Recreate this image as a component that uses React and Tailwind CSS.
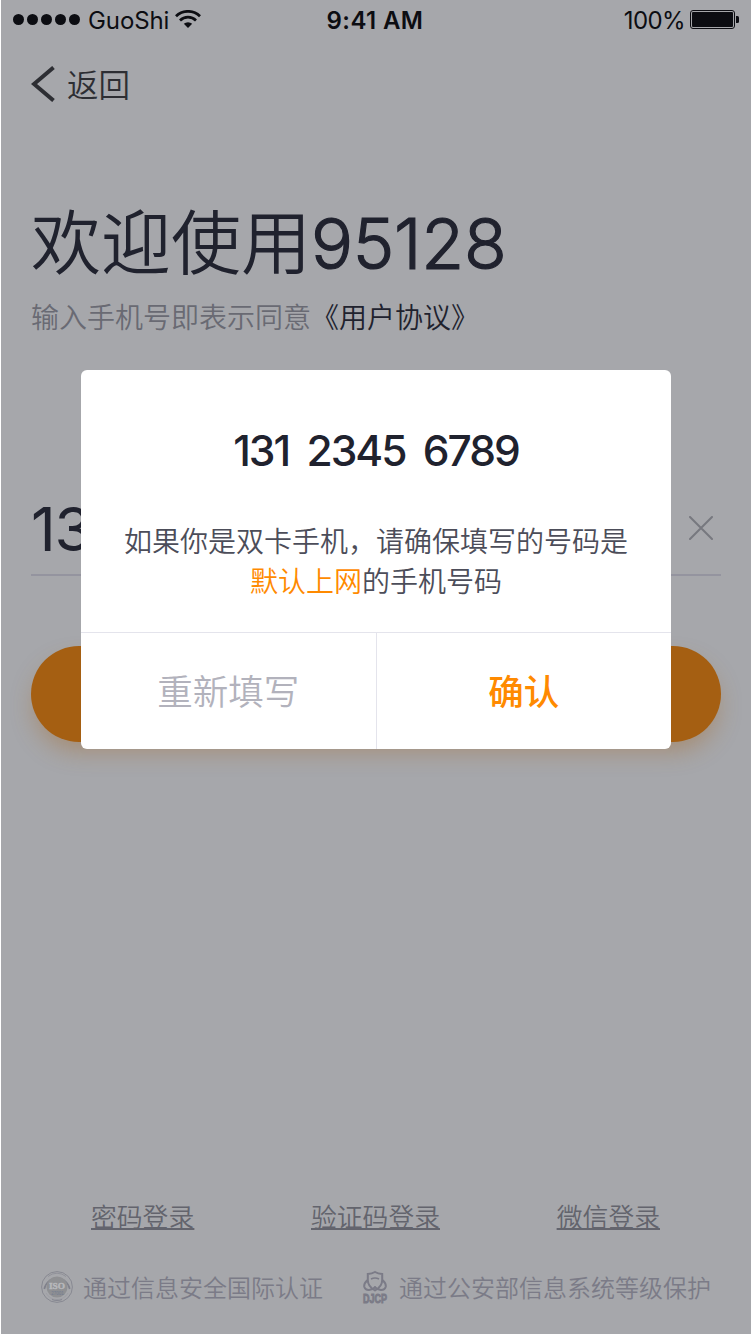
import React from "react";

const latin = "font-['Inter','Noto_Sans_CJK_SC',sans-serif]";

function StatusBar() {
  return (
    <div className="flex h-10 items-center justify-between text-[24px] leading-[38px] text-[#0c0d12]">
      <div className="flex w-[250px] items-center pl-3">
        <div className="mb-px flex gap-[3px]">
          {[0, 1, 2, 3, 4].map((i) => (
            <span key={i} className="h-[11px] w-[11px] rounded-full bg-[#0c0d12]" />
          ))}
        </div>
        <span className="ml-[8px] pt-[2px] tracking-[-0.1px]">GuoShi</span>
        <svg className="mb-[3px] ml-[6px] h-[18px] w-[26px]" viewBox="0 0 26 18" fill="none" stroke="currentColor" strokeWidth="2.8">
          <path d="M1 6.2a17.3 17.3 0 0 1 24 0" />
          <path d="M5 10.4a11.6 11.6 0 0 1 16 0" />
          <path d="M13 18l-4.2-4.2a6.2 6.2 0 0 1 8.4 0z" fill="currentColor" stroke="none" />
        </svg>
      </div>
      <span className="pt-[2px] pr-[2px] font-semibold tracking-[0.4px]">9:41 AM</span>
      <div className="flex w-[250px] items-center justify-end pr-[11px] pl-1">
        <span className="mr-[5px] pt-[2px] font-normal tracking-[-0.6px]">100%</span>
        <svg className="mb-[2px] mr-px h-[19px] w-[49px]" viewBox="0 0 49 19">
          <rect x="0.5" y="0.5" width="44" height="18" rx="2.5" fill="none" stroke="currentColor" />
          <rect x="2" y="2" width="41" height="15" rx="1" fill="currentColor" />
          <path d="M46 6h1.500a1.500 1.500 0 0 1 1.500 1.500v4a1.500 1.500 0 0 1-1.500 1.500H46z" fill="currentColor" />
        </svg>
      </div>
    </div>
  );
}

function IsoSeal() {
  return (
    <svg className="h-8 w-8" viewBox="0 0 32 32" fill="none">
      <circle cx="16" cy="16" r="15.4" stroke="#85868f" strokeWidth="0.9" />
      <path d="M3.300 18A12.900 12.900 0 0 1 28.700 18" stroke="#7f808b" strokeWidth="1.600" />
      <path d="M7 5.500A14 14 0 0 1 25 5.500" stroke="#8c8d95" strokeWidth="0.8" />
      <circle cx="16" cy="16" r="10.500" fill="#8f9093" />
      <path d="M5 22a12.600 12.600 0 0 0 22 0" stroke="#999aa0" strokeWidth="0.7" />
      <path d="M11 28.500q5 1.800 10 0" stroke="#858690" strokeWidth="1.200" />
      <text x="16" y="17.800" textAnchor="middle" textLength="16" lengthAdjust="spacingAndGlyphs" fontFamily="Liberation Serif" fontWeight="700" fontSize="8.500" fill="#b8b9bc" stroke="#b8b9bc" strokeWidth="0.4">ISO</text>
      <text x="16.500" y="24.300" textAnchor="middle" fontFamily="Liberation Sans" fontSize="4.500" fill="#727b91">27001</text>
    </svg>
  );
}

function DjcpBadge() {
  return (
    <svg className="h-8 w-6 overflow-visible" viewBox="0 0 24 32" fill="none" stroke="#7b7b87">
      <path d="M12 1Q9 2.800 4.800 3v6q0 6.500 7.200 10.500 7.200-4 7.200-10.500V3Q15 2.800 12 1z" strokeWidth="2" />
      <path d="M8 8q4-2 8 0" strokeWidth="1.500" />
      <path d="M4.300 9.200Q.8 12.500 1.200 15.500 2 19 6 19q3.500-.2 7-3.200" strokeWidth="2" />
      <path d="M19.700 9.200q3.500 3.300 3.100 6.300-.8 3.500-4.800 3.500-3.500-.2-7-3.200" strokeWidth="2" />
      <text x="0" y="31.500" textLength="24" lengthAdjust="spacingAndGlyphs" fontFamily="Liberation Sans Narrow, Liberation Sans" fontWeight="700" fontSize="13.500" fill="#7b7b87" strokeWidth="1">DJCP</text>
    </svg>
  );
}

function Dialog() {
  return (
    <div className="absolute inset-0 flex justify-center pt-[370px]">
      <div className="flex h-[379px] w-[590px] flex-col overflow-hidden rounded-[6px] bg-white">
        <div className="flex h-[262px] flex-col items-center">
          <h2 className="mt-[51px] text-[42.5px] leading-[60px] font-medium tracking-[-2px] text-[#20222e] [word-spacing:8px]">131 2345 6789</h2>
          <p className="mt-[41px] text-center text-[28px] leading-[40px] font-[350] text-[#4c4d59]">
            如果你是双卡手机，请确保填写的号码是
            <br />
            <span className="text-[#ff8a00]">默认上网</span>的手机号码
          </p>
        </div>
        <div className="flex flex-1 border-t border-[#e4e4ec] text-[35.5px]">
          <button className="flex-1 border-r border-[#e4e4ec] pt-1 font-[350] text-[#b2b2bc]">重新填写</button>
          <button className="flex-1 pt-1 font-medium text-[#ff8a00]">确认</button>
        </div>
      </div>
    </div>
  );
}

export default function App() {
  return (
    <div className={`h-[1334px] w-[751px] overflow-hidden bg-white pl-px ${latin}`}>
      <div className="relative flex h-full flex-col overflow-hidden bg-[#a6a7ab]">
        <StatusBar />
        <div className="flex h-[88px] items-center pl-[30px] text-[#2d2e33]">
          <svg className="h-9 w-6" viewBox="0 0 24 36" fill="none" stroke="currentColor" strokeWidth="4">
            <path d="M22.500 1.500L3 18l19.500 16.500" />
          </svg>
          <span className="ml-[12px] pt-[3px] text-[31.5px] leading-[40px] font-[350]">返回</span>
        </div>
        <h1 className="mt-[67px] flex h-[98px] pl-[30px] text-[70px] leading-[98px] font-[350] text-[#20222e]">
          欢迎使用
          <span className="text-[70px] font-[340] tracking-[-0.3px] [-webkit-text-stroke:1.2px_#20222e]">95128</span>
        </h1>
        <p className="mt-[5px] pl-[30px] text-[28px] leading-[40px] font-[350] text-[#696a73]">
          输入手机号即表示同意<span className="text-[#20222e]">《用户协议》</span>
        </p>
        <div className="mx-[30px] mt-[142px] flex h-[96px] items-center justify-between border-b-2 border-[#94949f] pr-2">
          <span className="pt-1 text-[61px] leading-[84px] font-[370] tracking-[-1.2px] text-[#20222e]">13</span>
          <svg className="mt-0.5 h-6 w-6" viewBox="0 0 24 24" stroke="#77787f" strokeWidth="2" strokeLinecap="round">
            <path d="M1 1l22 22M23 1L1 23" />
          </svg>
        </div>
        <div className="mx-[30px] mt-[70px] h-24 rounded-full bg-[#a55f12] shadow-[0_12px_24px_-4px_rgba(165,95,18,0.38)]" />
        <div className="mt-[457px] flex justify-between pr-[91px] pl-[90px] text-[25.8px] leading-[38px] font-[350] text-[#63646d] underline decoration-2 underline-offset-[1px]">
          <a>密码登录</a>
          <a>验证码登录</a>
          <a>微信登录</a>
        </div>
        <div className="mt-[31px] flex items-center pl-[40px] text-[24px] leading-[34px] font-[350] text-[#7b7b87]">
          <IsoSeal />
          <span className="ml-[10px] pt-1">通过信息安全国际认证</span>
          <span className="ml-[40px]">
            <DjcpBadge />
          </span>
          <span className="ml-[12px] pt-1">通过公安部信息系统等级保护</span>
        </div>
        <Dialog />
      </div>
    </div>
  );
}
